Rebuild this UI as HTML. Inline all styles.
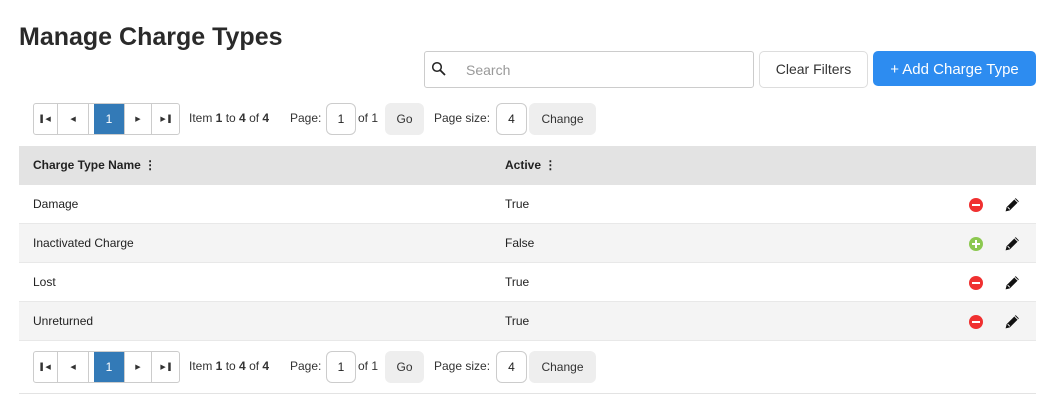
<!DOCTYPE html><html><head><style>
body{margin:0;width:1054px;height:414px;background:#fff;font-family:"Liberation Sans",Arial,sans-serif;color:#222;position:relative;overflow:hidden}
.a{position:absolute}
h1{position:absolute;left:19px;top:23px;margin:0;font-size:25px;font-weight:bold;color:#2a2a2a}
.search{left:424px;top:51px;width:328px;height:35px;border:1px solid #ccc;border-radius:3px}
.search span{position:absolute;left:41px;top:10px;font-size:14px;color:#999}
.btn{border:1px solid #ddd;border-radius:5px;font-size:14px;text-align:center;box-sizing:border-box}
.pager{position:absolute;left:33px;height:32px;width:147px;border:1px solid #ccc;border-radius:3px;box-sizing:border-box;display:flex}
.pager div{border-right:1px solid #ccc;display:flex;align-items:center;justify-content:center;font-size:7px;color:#333}
.pager div:last-child{border-right:0}
.pt{position:absolute;font-size:12px;color:#333}
.inp{position:absolute;border:1px solid #ccc;border-radius:6px;box-sizing:border-box;font-size:12px;text-align:center;line-height:30px;height:32px}
.gb{position:absolute;background:#eee;border-radius:6px;font-size:12px;text-align:center;line-height:32px;height:32px;color:#333}
.row{position:absolute;left:19px;width:1017px;height:39px;font-size:12px;color:#222;border-bottom:1px solid #e8e8e8;box-sizing:border-box}
.row span{position:absolute;top:12px}
.rm,.ad{position:absolute;left:950px;top:13px;width:14px;height:14px;border-radius:50%;background:#f03030}
.rm:after{content:"";position:absolute;left:3px;top:6px;width:8px;height:2.4px;background:#fff}
.ad{background:#8cc850}
.ad:after{content:"";position:absolute;left:3px;top:6px;width:8px;height:2.4px;background:#fff}
.ad:before{content:"";position:absolute;left:6px;top:3px;width:2.4px;height:8px;background:#fff}
.pen{position:absolute;left:985px;top:11px}
</style></head><body>
<h1>Manage Charge Types</h1>
<div class="a search"><svg class="a" style="left:6px;top:9px" width="16" height="16" viewBox="0 0 16 16"><circle cx="6" cy="6" r="4.3" fill="none" stroke="#222" stroke-width="1.5"/><path d="M9 9l5 5" stroke="#222" stroke-width="1.8"/></svg><span>Search</span></div>
<div class="a btn" style="left:759px;top:51px;width:109px;height:37px;line-height:35px;color:#333">Clear Filters</div>
<div class="a btn" style="left:873px;top:51px;width:163px;height:35px;line-height:35px;background:#2d8cf0;border-color:#2d8cf0;color:#fff;font-size:15px">+ Add Charge Type</div>

<div class="pager" style="top:103px"><div style="width:24px">&#9612;&#9664;</div><div style="width:31px">&#9664;</div><div style="width:31px;background:#337ab7;color:#fff;font-size:12px;margin-left:5px">1</div><div style="width:27px">&#9654;</div><div style="width:28px">&#9654;&#9616;</div></div>
<div class="pt" style="left:189px;top:111px">Item <b>1</b> to <b>4</b> of <b>4</b></div>
<div class="pt" style="left:290px;top:111px">Page:</div>
<div class="inp" style="left:326px;top:103px;width:30px">1</div>
<div class="pt" style="left:358px;top:111px">of 1</div>
<div class="gb" style="left:385px;top:103px;width:39px">Go</div>
<div class="pt" style="left:434px;top:111px">Page size:</div>
<div class="inp" style="left:496px;top:103px;width:31px">4</div>
<div class="gb" style="left:529px;top:103px;width:67px">Change</div>

<div class="row" style="top:146px;background:#e3e3e3;font-weight:bold;border:0"><span style="left:14px">Charge Type Name &#8942;</span><span style="left:486px">Active &#8942;</span></div>
<div class="row" style="top:185px"><span style="left:14px">Damage</span><span style="left:486px">True</span><i class="rm"></i><svg class="pen" width="17" height="17" viewBox="0 0 16 16"><path d="M1.5 14.5l1-4 8.5-8.5 3 3-8.5 8.5z" fill="#111"/><path d="M3.5 10.5l2 2M10 3l3 3" stroke="#fff" stroke-width="0.9"/></svg></div>
<div class="row" style="top:224px;background:#f4f4f4"><span style="left:14px">Inactivated Charge</span><span style="left:486px">False</span><i class="ad"></i><svg class="pen" width="17" height="17" viewBox="0 0 16 16"><path d="M1.5 14.5l1-4 8.5-8.5 3 3-8.5 8.5z" fill="#111"/><path d="M3.5 10.5l2 2M10 3l3 3" stroke="#fff" stroke-width="0.9"/></svg></div>
<div class="row" style="top:263px"><span style="left:14px">Lost</span><span style="left:486px">True</span><i class="rm"></i><svg class="pen" width="17" height="17" viewBox="0 0 16 16"><path d="M1.5 14.5l1-4 8.5-8.5 3 3-8.5 8.5z" fill="#111"/><path d="M3.5 10.5l2 2M10 3l3 3" stroke="#fff" stroke-width="0.9"/></svg></div>
<div class="row" style="top:302px;background:#f4f4f4"><span style="left:14px">Unreturned</span><span style="left:486px">True</span><i class="rm"></i><svg class="pen" width="17" height="17" viewBox="0 0 16 16"><path d="M1.5 14.5l1-4 8.5-8.5 3 3-8.5 8.5z" fill="#111"/><path d="M3.5 10.5l2 2M10 3l3 3" stroke="#fff" stroke-width="0.9"/></svg></div>

<div class="pager" style="top:351px"><div style="width:24px">&#9612;&#9664;</div><div style="width:31px">&#9664;</div><div style="width:31px;background:#337ab7;color:#fff;font-size:12px;margin-left:5px">1</div><div style="width:27px">&#9654;</div><div style="width:28px">&#9654;&#9616;</div></div>
<div class="pt" style="left:189px;top:359px">Item <b>1</b> to <b>4</b> of <b>4</b></div>
<div class="pt" style="left:290px;top:359px">Page:</div>
<div class="inp" style="left:326px;top:351px;width:30px">1</div>
<div class="pt" style="left:358px;top:359px">of 1</div>
<div class="gb" style="left:385px;top:351px;width:39px">Go</div>
<div class="pt" style="left:434px;top:359px">Page size:</div>
<div class="inp" style="left:496px;top:351px;width:31px">4</div>
<div class="gb" style="left:529px;top:351px;width:67px">Change</div>
<div class="a" style="left:19px;top:393px;width:1017px;height:1px;background:#e3e3e3"></div>
</body></html>
